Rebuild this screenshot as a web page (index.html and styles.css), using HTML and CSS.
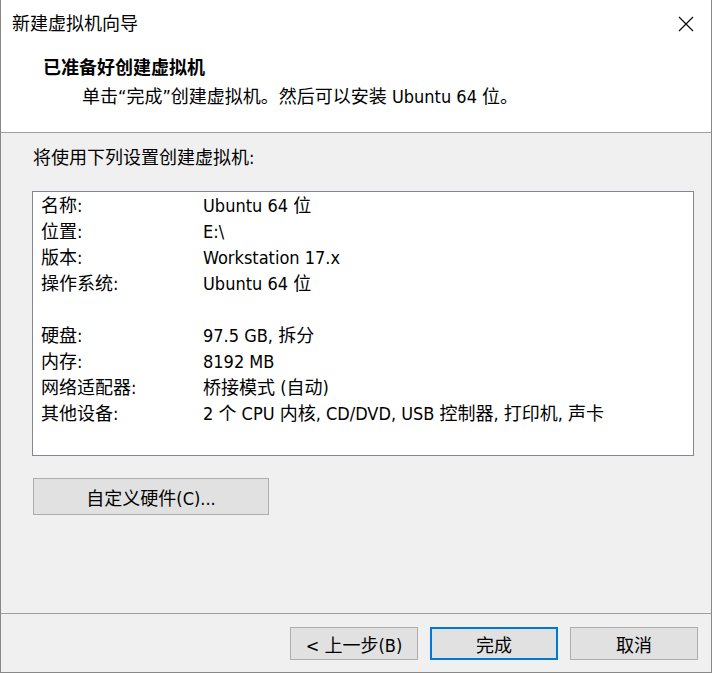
FILE: index.html
```html
<!DOCTYPE html>
<html lang="zh-CN">
<head>
<meta charset="utf-8">
<title>新建虚拟机向导</title>
<link rel="stylesheet" href="styles.css">
</head>
<body>
<div class="window">
  <div class="header">
    <div class="titlebar">
      <span class="title">新建虚拟机向导</span>
      <svg class="close" width="16" height="16" viewBox="0 0 16 16"><path d="M1 1 L15 15 M15 1 L1 15" stroke="#000" stroke-width="1.1" fill="none"/></svg>
    </div>
    <div class="head-title">已准备好创建虚拟机</div>
    <div class="head-sub">单击“完成”创建虚拟机。然后可以安装 Ubuntu 64 位。</div>
  </div>
  <div class="body">
    <div class="intro">将使用下列设置创建虚拟机:</div>
    <div class="summary">
      <div class="lbl">名称:</div><div class="val">Ubuntu 64 位</div>
      <div class="lbl">位置:</div><div class="val">E:\</div>
      <div class="lbl">版本:</div><div class="val">Workstation 17.x</div>
      <div class="lbl">操作系统:</div><div class="val">Ubuntu 64 位</div>
      <div class="lbl">&nbsp;</div><div class="val">&nbsp;</div>
      <div class="lbl">硬盘:</div><div class="val">97.5 GB, 拆分</div>
      <div class="lbl">内存:</div><div class="val">8192 MB</div>
      <div class="lbl">网络适配器:</div><div class="val">桥接模式 (自动)</div>
      <div class="lbl">其他设备:</div><div class="val">2 个 CPU 内核, CD/DVD, USB 控制器, 打印机, 声卡</div>
    </div>
    <div class="btn custom">自定义硬件(C)...</div>
  </div>
  <div class="footer">
    <div class="btn">&lt; 上一步(B)</div>
    <div class="btn primary">完成</div>
    <div class="btn">取消</div>
  </div>
</div>
</body>
</html>
```
FILE: styles.css
```css
html, body {
  margin: 0;
  padding: 0;
}
body {
  font-family: "DejaVu Sans Condensed", "DejaVu Sans", "Noto Sans CJK SC", sans-serif;
  font-size: 18px;
  color: #000;
  background: #fff;
}
.window {
  width: 712px;
  height: 673px;
  box-sizing: border-box;
  border: 1px solid #888;
  border-top: none;
  display: flex;
  flex-direction: column;
  background: #f0f0f0;
}
.header {
  background: #fff;
  height: 132px;
  border-bottom: 1px solid #a0a0a0;
  flex: none;
}
.titlebar {
  height: 46px;
  display: flex;
  align-items: center;
  justify-content: space-between;
  padding: 1px 17px 0 11px;
  box-sizing: border-box;
}
.title {
  line-height: 44px;
}
.close {
  display: block;
}
.head-title {
  font-weight: bold;
  padding-left: 42px;
  line-height: 26px;
  margin-top: 9px;
}
.head-sub {
  padding-left: 81px;
  line-height: 26px;
  margin-top: 3px;
}
.body {
  flex: 1;
  padding: 12px 17px 0 31px;
}
.intro {
  line-height: 26px;
  padding-left: 1px;
}
.summary {
  margin-top: 20px;
  height: 262px;
  background: #fff;
  border: 1px solid #828790;
  display: grid;
  grid-template-columns: 162px 1fr;
  grid-auto-rows: 26px;
  align-content: start;
  padding: 1px 0 0 8px;
  box-sizing: content-box;
}
.lbl, .val {
  line-height: 26px;
  white-space: nowrap;
}
.btn {
  box-sizing: border-box;
  width: 128px;
  height: 33px;
  background: #e1e1e1;
  border: 1px solid #adadad;
  display: flex;
  align-items: center;
  justify-content: center;
}
.btn.custom {
  width: 236px;
  height: 37px;
  margin: 22px 0 0 1px;
}
.btn.primary {
  border: 2px solid #0078d7;
}
.footer {
  flex: none;
  height: 59px;
  border-top: 1px solid #a0a0a0;
  box-sizing: border-box;
  display: flex;
  justify-content: flex-end;
  align-items: flex-start;
  gap: 12px;
  padding: 13px 13px 0 0;
}
```
